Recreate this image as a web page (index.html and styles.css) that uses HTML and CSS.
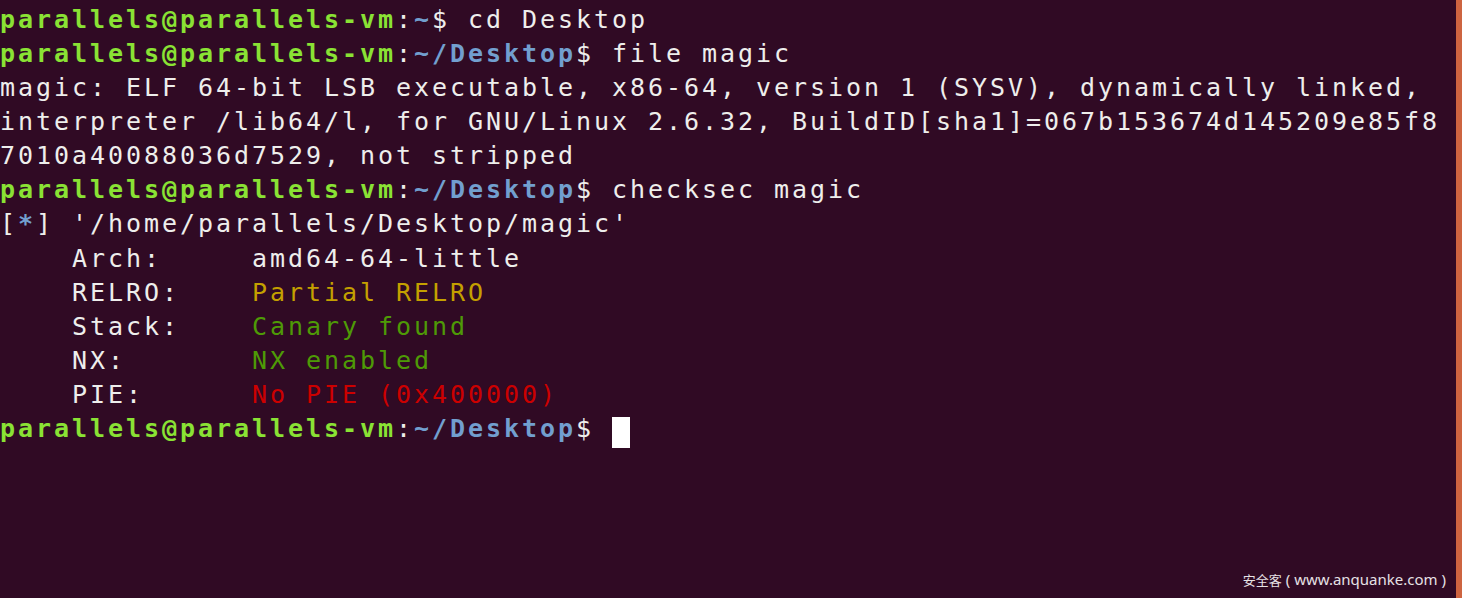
FILE: index.html
```html
<!DOCTYPE html>
<html lang="en">
<head>
<meta charset="utf-8">
<title>Terminal</title>
<link rel="stylesheet" href="styles.css">
</head>
<body>
<div class="window">
  <div class="terminal">
    <div class="line"><span class="user">parallels@parallels-vm</span>:<span class="path">~</span>$ cd Desktop</div>
    <div class="line"><span class="user">parallels@parallels-vm</span>:<span class="path">~/Desktop</span>$ file magic</div>
    <div class="line">magic: ELF 64-bit LSB executable, x86-64, version 1 (SYSV), dynamically linked,</div>
    <div class="line">interpreter /lib64/l, for GNU/Linux 2.6.32, BuildID[sha1]=067b153674d145209e85f8</div>
    <div class="line">7010a40088036d7529, not stripped</div>
    <div class="line"><span class="user">parallels@parallels-vm</span>:<span class="path">~/Desktop</span>$ checksec magic</div>
    <div class="line">[<span class="star">*</span>] '/home/parallels/Desktop/magic'</div>
    <div class="line">    Arch:     amd64-64-little</div>
    <div class="line">    RELRO:    <span class="yellow">Partial RELRO</span></div>
    <div class="line">    Stack:    <span class="green">Canary found</span></div>
    <div class="line">    NX:       <span class="green">NX enabled</span></div>
    <div class="line">    PIE:      <span class="red">No PIE (0x400000)</span></div>
    <div class="line"><span class="user">parallels@parallels-vm</span>:<span class="path">~/Desktop</span>$ <span class="cursor"> </span></div>
  </div>
  <div class="edge"></div>
  <div class="watermark"><span class="wm-cjk">安全客</span><span class="wm-latin"> ( www.anquanke.com )</span></div>
</div>
</body>
</html>
```

FILE: styles.css
```css
html, body {
  margin: 0;
  padding: 0;
  background: #300a24;
}

.window {
  position: relative;
  display: flex;
  width: 1462px;
  height: 598px;
  overflow: hidden;
  background: #300a24;
}

.terminal {
  flex: 1;
  padding-top: 3px;
  font-family: "DejaVu Sans Mono", monospace;
  font-size: 25px;
  letter-spacing: 2.95px;
  line-height: 34.08px;
  color: #eeeeec;
}

.line {
  white-space: pre;
  height: 34.08px;
}

.user {
  color: #8ae234;
  font-weight: bold;
}

.path {
  color: #729fcf;
  font-weight: bold;
}

.star {
  color: #729fcf;
  font-weight: bold;
}

.yellow { color: #c4a000; }
.green { color: #4e9a06; }
.red { color: #cc0000; }

.cursor {
  display: inline-block;
  width: 18px;
  height: 31px;
  vertical-align: -5px;
  background: #ffffff;
}

.edge {
  width: 6px;
  background: #cd6440;
}

.watermark {
  position: absolute;
  right: 16px;
  bottom: 9px;
  display: flex;
  align-items: baseline;
  color: #e6e1e4;
  white-space: pre;
}

.wm-cjk {
  font-family: "Noto Sans CJK SC", sans-serif;
  font-size: 13px;
}

.wm-latin {
  font-family: "Noto Sans", sans-serif;
  font-size: 15px;
}
```
